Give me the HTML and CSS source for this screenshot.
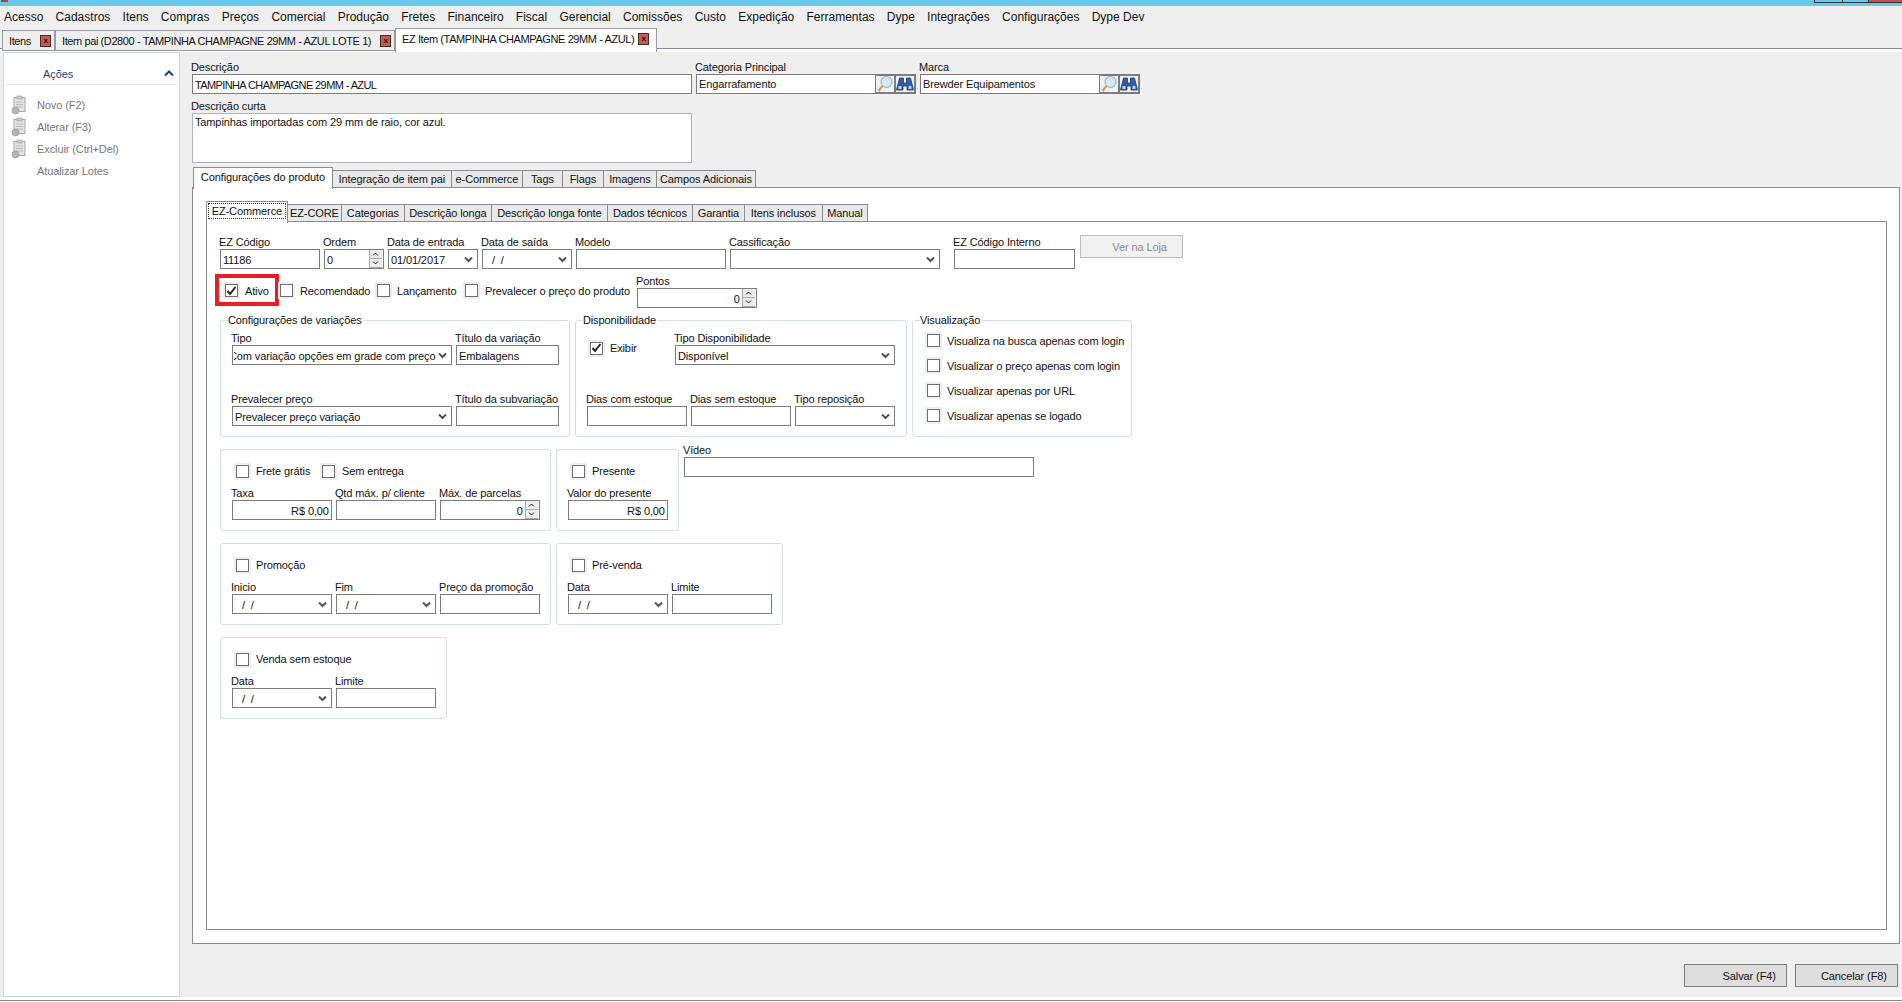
FILE: index.html
```html
<!DOCTYPE html>
<html lang="pt-BR">
<head>
    <meta charset="UTF-8">
    <title>EZ Item</title>
    <link rel="stylesheet" href="styles.css">
</head>
<body>
    <svg class="defs" width="0" height="0">
        <symbol id="chev" viewBox="0 0 9 7"><path d="M1 1.5 4.5 5 8 1.5" fill="none" stroke="#555" stroke-width="2"/></symbol>
        <symbol id="up" viewBox="0 0 7 4"><path d="M1 3.5 3.5 1 6 3.5" fill="none" stroke="#222" stroke-width="1"/></symbol>
        <symbol id="down" viewBox="0 0 7 4"><path d="M1 .5 3.5 3 6 .5" fill="none" stroke="#222" stroke-width="1"/></symbol>
        <symbol id="lens" viewBox="0 0 16 18">
            <circle cx="9.5" cy="7" r="5.5" fill="#d5e8f5" stroke="#9ab6cc" stroke-width="1.2"/>
            <path d="M5.5 11 1.5 16" stroke="#d49a6a" stroke-width="2.4"/>
        </symbol>
        <symbol id="bino" viewBox="0 0 18 18">
            <path d="M3.5 3h4v5h3V3h4l3 12h-6.5V11H7v4H.5z" fill="#2f5fa8" stroke="#17386e" stroke-width=".8"/>
            <path d="M2.5 11h3v3h-3zM12.5 11h3v3h-3z" fill="#b9d2ee"/>
        </symbol>
        <symbol id="clip" viewBox="0 0 16 20">
            <rect x="3" y="2.5" width="11" height="14" fill="#e4e4e4" stroke="#a8a8a8"/>
            <rect x="6" y="1" width="5" height="3" fill="#c8c8c8" stroke="#9a9a9a" stroke-width=".6"/>
            <path d="M5 7h7M5 9.5h7M5 12h7" stroke="#b8b8b8"/>
            <circle cx="4.5" cy="15.5" r="3.5" fill="#b4b4b4" stroke="#949494" stroke-width=".6"/>
        </symbol>
    </svg>

    <div class="titlebar">
        <span class="app_icon"></span>
        <div class="win_btns"><span class="win_btn"></span><span class="win_btn win_btn2"></span><span class="win_btn win_close"></span></div>
    </div>

    <nav class="menubar">
        <span>Acesso</span><span>Cadastros</span><span>Itens</span><span>Compras</span><span>Preços</span><span>Comercial</span><span>Produção</span><span>Fretes</span><span>Financeiro</span><span>Fiscal</span><span>Gerencial</span><span>Comissões</span><span>Custo</span><span>Expedição</span><span>Ferramentas</span><span>Dype</span><span>Integrações</span><span>Configurações</span><span>Dype Dev</span>
    </nav>

    <div class="doc_tabs">
        <div class="doc_tab dt_itens">Itens<span class="close_x">x</span></div>
        <div class="doc_tab dt_pai">Item pai (D2800 - TAMPINHA CHAMPAGNE 29MM - AZUL LOTE 1)<span class="close_x">x</span></div>
        <div class="doc_tab dt_ez doc_active">EZ Item (TAMPINHA CHAMPAGNE 29MM - AZUL)<span class="close_x">x</span></div>
    </div>

    <div class="workspace">
        <aside class="sidebar">
            <div class="side_head"><span>Ações</span><svg class="side_chev" width="10" height="7" viewBox="0 0 10 7"><path d="M1 5.5l4-4 4 4" fill="none" stroke="#1c3f94" stroke-width="2"/></svg></div>
            <div class="side_item"><svg class="side_icon"><use href="#clip"/></svg>Novo (F2)</div>
            <div class="side_item"><svg class="side_icon"><use href="#clip"/></svg>Alterar (F3)</div>
            <div class="side_item"><svg class="side_icon"><use href="#clip"/></svg>Excluir (Ctrl+Del)</div>
            <div class="side_item"><span class="side_icon"></span>Atualizar Lotes</div>
        </aside>

        <main class="main">
            <div class="top_row">
                <div class="field w500"><label>Descrição</label><div class="input caps">TAMPINHA CHAMPAGNE 29MM - AZUL</div></div>
                <div class="field w220"><label>Categoria Principal</label>
                    <div class="input lookup">Engarrafamento
                        <span class="look_btn"><svg width="16" height="18"><use href="#lens"/></svg></span><span class="look_btn"><svg width="18" height="18"><use href="#bino"/></svg></span>
                    </div>
                </div>
                <div class="field w220"><label>Marca</label>
                    <div class="input lookup">Brewder Equipamentos
                        <span class="look_btn"><svg width="16" height="18"><use href="#lens"/></svg></span><span class="look_btn"><svg width="18" height="18"><use href="#bino"/></svg></span>
                    </div>
                </div>
            </div>
            <div class="field w500 short_desc"><label>Descrição curta</label><div class="input textarea">Tampinhas importadas com 29 mm de raio, cor azul.</div></div>

            <div class="tabs outer_tabs">
                <div class="tab tab_active ot1">Configurações do produto</div>
                <div class="tab ot2">Integração de item pai</div>
                <div class="tab ot3">e-Commerce</div>
                <div class="tab ot4">Tags</div>
                <div class="tab ot5">Flags</div>
                <div class="tab ot6">Imagens</div>
                <div class="tab ot7">Campos Adicionais</div>
            </div>
            <div class="outer_panel">
                <div class="tabs inner_tabs">
                    <div class="tab tab_active it1"><span class="focus_txt">EZ-Commerce</span></div>
                    <div class="tab it2">EZ-CORE</div>
                    <div class="tab it3">Categorias</div>
                    <div class="tab it4">Descrição longa</div>
                    <div class="tab it5">Descrição longa fonte</div>
                    <div class="tab it6">Dados técnicos</div>
                    <div class="tab it7">Garantia</div>
                    <div class="tab it8">Itens inclusos</div>
                    <div class="tab it9">Manual</div>
                </div>
                <div class="inner_panel">
                    <div class="row">
                        <div class="field w100"><label>EZ Código</label><div class="input">11186</div></div>
                        <div class="field w60"><label>Ordem</label><div class="input">0<span class="spin"><i><svg width="7" height="4"><use href="#up"/></svg></i><i><svg width="7" height="4"><use href="#down"/></svg></i></span></div></div>
                        <div class="field w90"><label>Data de entrada</label><div class="input select">01/01/2017<svg class="chev"><use href="#chev"/></svg></div></div>
                        <div class="field w90"><label>Data de saída</label><div class="input select date_empty">/ /<svg class="chev"><use href="#chev"/></svg></div></div>
                        <div class="field w150"><label>Modelo</label><div class="input"></div></div>
                        <div class="field w210"><label>Cassificação</label><div class="input select"><svg class="chev"><use href="#chev"/></svg></div></div>
                        <div class="field w121 code_int"><label>EZ Código Interno</label><div class="input"></div></div>
                        <div class="btn btn_off">Ver na Loja</div>
                    </div>

                    <div class="flags_row">
                        <div class="check red_mark"><span class="box on"><svg width="11" height="10" viewBox="0 0 11 10"><path d="M1.5 5 4 8l5.5-7" fill="none" stroke="#222" stroke-width="2"/></svg></span>Ativo</div>
                        <div class="check c_rec"><span class="box"></span>Recomendado</div>
                        <div class="check c_lan"><span class="box"></span>Lançamento</div>
                        <div class="check c_pre"><span class="box"></span>Prevalecer o preço do produto</div>
                        <div class="field w120"><label>Pontos</label><div class="input num">0<span class="spin"><i><svg width="7" height="4"><use href="#up"/></svg></i><i><svg width="7" height="4"><use href="#down"/></svg></i></span></div></div>
                    </div>

                    <div class="row group_row">
                        <div class="group g_conf">
                            <span class="legend">Configurações de variações</span>
                            <div class="row">
                                <div class="field w220"><label>Tipo</label><div class="input select clip_left"><span class="clip_txt">Com variação opções em grade com preço</span><svg class="chev"><use href="#chev"/></svg></div></div>
                                <div class="field w103"><label>Título da variação</label><div class="input">Embalagens</div></div>
                            </div>
                            <div class="row row_gap">
                                <div class="field w220"><label>Prevalecer preço</label><div class="input select">Prevalecer preço variação<svg class="chev"><use href="#chev"/></svg></div></div>
                                <div class="field w103"><label>Título da subvariação</label><div class="input"></div></div>
                            </div>
                        </div>
                        <div class="group g_disp">
                            <span class="legend">Disponibilidade</span>
                            <div class="row">
                                <div class="check c_exibir"><span class="box on"><svg width="11" height="10" viewBox="0 0 11 10"><path d="M1.5 5 4 8l5.5-7" fill="none" stroke="#222" stroke-width="2"/></svg></span>Exibir</div>
                                <div class="field w220"><label>Tipo Disponibilidade</label><div class="input select">Disponível<svg class="chev"><use href="#chev"/></svg></div></div>
                            </div>
                            <div class="row row_gap">
                                <div class="field w100"><label>Dias com estoque</label><div class="input"></div></div>
                                <div class="field w100"><label>Dias sem estoque</label><div class="input"></div></div>
                                <div class="field w100"><label>Tipo reposição</label><div class="input select"><svg class="chev"><use href="#chev"/></svg></div></div>
                            </div>
                        </div>
                        <div class="group g_vis">
                            <span class="legend">Visualização</span>
                            <div class="check"><span class="box"></span>Visualiza na busca apenas com login</div>
                            <div class="check"><span class="box"></span>Visualizar o preço apenas com login</div>
                            <div class="check"><span class="box"></span>Visualizar apenas por URL</div>
                            <div class="check"><span class="box"></span>Visualizar apenas se logado</div>
                        </div>
                    </div>

                    <div class="row block_row">
                        <div class="group small_group g_331">
                            <div class="row check_line">
                                <div class="check c_frete"><span class="box"></span>Frete grátis</div>
                                <div class="check"><span class="box"></span>Sem entrega</div>
                            </div>
                            <div class="row">
                                <div class="field w100"><label>Taxa</label><div class="input num">R$ 0,00</div></div>
                                <div class="field w100"><label>Qtd máx. p/ cliente</label><div class="input"></div></div>
                                <div class="field w100"><label>Máx. de parcelas</label><div class="input num">0<span class="spin"><i><svg width="7" height="4"><use href="#up"/></svg></i><i><svg width="7" height="4"><use href="#down"/></svg></i></span></div></div>
                            </div>
                        </div>
                        <div class="group small_group g_123">
                            <div class="row check_line"><div class="check"><span class="box"></span>Presente</div></div>
                            <div class="field w100"><label>Valor do presente</label><div class="input num">R$ 0,00</div></div>
                        </div>
                        <div class="field w350 video"><label>Vídeo</label><div class="input"></div></div>
                    </div>

                    <div class="row block_row">
                        <div class="group small_group g_331">
                            <div class="row check_line"><div class="check"><span class="box"></span>Promoção</div></div>
                            <div class="row">
                                <div class="field w100"><label>Inicio</label><div class="input select date_empty">/ /<svg class="chev"><use href="#chev"/></svg></div></div>
                                <div class="field w100"><label>Fim</label><div class="input select date_empty">/ /<svg class="chev"><use href="#chev"/></svg></div></div>
                                <div class="field w100"><label>Preço da promoção</label><div class="input"></div></div>
                            </div>
                        </div>
                        <div class="group small_group g_227">
                            <div class="row check_line"><div class="check"><span class="box"></span>Pré-venda</div></div>
                            <div class="row">
                                <div class="field w100"><label>Data</label><div class="input select date_empty">/ /<svg class="chev"><use href="#chev"/></svg></div></div>
                                <div class="field w100"><label>Limite</label><div class="input"></div></div>
                            </div>
                        </div>
                    </div>

                    <div class="row block_row">
                        <div class="group small_group g_227">
                            <div class="row check_line"><div class="check"><span class="box"></span>Venda sem estoque</div></div>
                            <div class="row">
                                <div class="field w100"><label>Data</label><div class="input select date_empty">/ /<svg class="chev"><use href="#chev"/></svg></div></div>
                                <div class="field w100"><label>Limite</label><div class="input"></div></div>
                            </div>
                        </div>
                    </div>
                </div>
            </div>

            <div class="footer">
                <div class="btn">Salvar (F4)</div>
                <div class="btn">Cancelar (F8)</div>
            </div>
        </main>
    </div>
    <div class="bottom_line"></div>
</body>
</html>
```

FILE: styles.css
```css
* {
    margin: 0;
    padding: 0;
    box-sizing: border-box;
}
html, body {
    height: 100%;
    overflow: hidden;
}
body {
    background: #fff;
    color: #111;
    font-family: "Liberation Sans", Arial, sans-serif;
    font-size: 11px;
    line-height: 14px;
    letter-spacing: -.1px;
}
.defs {
    position: absolute;
}

/* top of the window */
.titlebar {
    position: relative;
    height: 6px;
    background: #66c9ec;
}
.app_icon {
    position: absolute;
    left: 1px;
    top: 0;
    width: 7px;
    height: 2px;
    background: #c23b2e;
}
.win_btns {
    position: absolute;
    right: 0;
    top: 0;
    display: flex;
}
.win_btn {
    width: 28px;
    height: 3px;
    border: 1px solid #333;
    border-top: 0;
    border-right: 0;
}
.win_btn2 {
    width: 26px;
}
.win_close {
    width: 34px;
    background: #c75050;
}
.menubar {
    display: flex;
    gap: 12.25px;
    height: 21px;
    padding: 4px 4px 0;
    background: #efefef;
    font-size: 12px;
    letter-spacing: 0;
}
.doc_tabs {
    display: flex;
    align-items: flex-start;
    height: 25px;
    padding: 1px 0 0 2px;
    background: linear-gradient(#efefef 21px, #8a8a94 21px, #8a8a94 22px, #fff 22px);
    letter-spacing: -.4px;
}
.doc_tab {
    display: flex;
    align-items: center;
    justify-content: space-between;
    height: 21px;
    margin-top: 2px;
    padding: 0 3px 0 6px;
    border: 1px solid #9a9aa2;
    background: #efefef;
    white-space: nowrap;
}
.doc_active {
    height: 24px;
    margin-top: 0;
    padding-right: 7px;
    padding-bottom: 3px;
    border-bottom: 0;
    background: #fff;
}
.dt_itens { width: 53px; }
.dt_pai { width: 340px; }
.dt_ez { width: 262px; }
.close_x {
    width: 11px;
    height: 12px;
    border: 1px solid #4a2a26;
    background: #c75a4f;
    color: #111;
    font-size: 8px;
    font-weight: bold;
    line-height: 9px;
    text-align: center;
}

.workspace {
    display: flex;
    height: 945px;
    background: #efefef;
}
.bottom_line {
    height: 1px;
    margin-top: 3px;
    background: #8a8a94;
}

/* left panel */
.sidebar {
    width: 178px;
    margin-left: 3px;
    border: 1px solid #cfd8de;
    background: #fff;
    color: #777;
}
.side_head {
    display: flex;
    align-items: center;
    justify-content: space-between;
    height: 32px;
    padding: 10px 5px 0 39px;
    border-bottom: 1px solid #e4e8ec;
    color: #1f3f77;
}
.side_chev {
    display: block;
}
.side_item {
    display: flex;
    align-items: center;
    gap: 10px;
    height: 22px;
    padding-left: 7px;
    position: relative;
    top: 9px;
}
.side_icon {
    width: 16px;
    height: 20px;
    display: block;
}

/* right side */
.main {
    width: 1721px;
    margin-left: 12px;
    padding-top: 8px;
}
.top_row {
    display: flex;
    gap: 4px;
}
.short_desc {
    margin-top: 5px;
}
.row {
    display: flex;
    gap: 4px;
}
.field {
    display: flex;
    flex-direction: column;
}
.field label {
    height: 14px;
    margin-left: -1px;
    white-space: nowrap;
}
.w60 { width: 60px; }
.w90 { width: 90px; }
.w100 { width: 100px; }
.w103 { width: 103px; }
.w120 { width: 120px; }
.w121 { width: 121px; }
.w150 { width: 150px; }
.w210 { width: 210px; }
.w220 { width: 220px; }
.w350 { width: 350px; }
.w500 { width: 500px; }

.input {
    display: flex;
    align-items: center;
    height: 20px;
    padding: 1px 2px 0 2px;
    border: 1px solid #7c7c7c;
    background: #fff;
    white-space: nowrap;
    overflow: hidden;
}
.caps {
    letter-spacing: -.6px;
}
.textarea {
    align-items: flex-start;
    height: 50px;
    padding-top: 1px;
    border-color: #aeb4b8;
}
.num {
    justify-content: flex-end;
}
.select {
    justify-content: space-between;
    padding-right: 4px;
}
.chev {
    width: 9px;
    height: 7px;
    margin-left: auto;
    flex-shrink: 0;
}
.date_empty {
    padding-left: 9px;
    word-spacing: 3px;
}
.clip_left {
    padding-left: 1px;
}
.clip_txt {
    display: block;
    width: 204px;
    flex-shrink: 0;
    overflow: hidden;
    text-indent: -5px;
}
.lookup {
    padding-right: 0;
    padding-top: 0;
}
.look_btn {
    display: flex;
    align-items: center;
    justify-content: center;
    width: 20px;
    height: 18px;
    border: 1px solid #7c7c7c;
    background: #f1f1f1;
}
.look_btn:first-of-type {
    margin-left: auto;
}
.spin {
    display: flex;
    flex-direction: column;
    width: 13px;
    height: 18px;
    margin: -1px -1px 0 2px;
    flex-shrink: 0;
}
.w60 .spin {
    margin-left: auto;
}
.spin i {
    display: flex;
    align-items: center;
    justify-content: center;
    height: 9px;
    border: 1px solid #a8a8a8;
    border-width: 0 0 1px 1px;
    background: #ececec;
}

/* tabs */
.tabs {
    display: flex;
    align-items: flex-end;
    position: relative;
    z-index: 1;
}
.outer_tabs {
    height: 21px;
    margin-top: 4px;
    margin-left: 1px;
}
.tab {
    display: flex;
    align-items: center;
    justify-content: center;
    height: 18px;
    margin-left: -1px;
    border: 1px solid #8a8a94;
    background: #e9e9e9;
    white-space: nowrap;
}
.tab_active {
    height: 22px;
    margin-bottom: -1px;
    padding-bottom: 3px;
    border-bottom: 0;
    background: #fff;
}
.ot1 { width: 140px; margin-left: 0; }
.ot2 { width: 120px; }
.ot3 { width: 72px; }
.ot4 { width: 41px; }
.ot5 { width: 42px; }
.ot6 { width: 54px; }
.ot7 { width: 100px; }
.it1 { width: 82px; margin-left: 0; }
.it2 { width: 55px; }
.it3 { width: 64px; }
.it4 { width: 88px; }
.it5 { width: 117px; }
.it6 { width: 86px; }
.it7 { width: 53px; }
.it8 { width: 79px; }
.it9 { width: 46px; }
.focus_txt {
    padding: 0 3px;
    border: 1px dotted #333;
}
.outer_panel {
    width: 1708px;
    height: 757px;
    margin-top: -1px;
    padding: 13px 12px 0 13px;
    border: 1px solid #8a8a94;
    background: #fff;
}
.inner_tabs {
    height: 21px;
}
.inner_panel {
    width: 1681px;
    height: 709px;
    margin-top: -1px;
    padding: 13px 13px 0;
    border: 1px solid #8a8a94;
    background: #fff;
}
.code_int {
    margin-left: 10px;
}
.btn {
    display: flex;
    align-items: center;
    justify-content: flex-end;
    width: 103px;
    height: 23px;
    padding-right: 10px;
    border: 1px solid #7c7c7c;
    background: #dedede;
}
.btn_off {
    margin-left: 1px;
    padding-right: 15px;
    border-color: #bcbcbc;
    background: #f1f1f1;
    color: #8a8a8a;
}

/* checkboxes */
.check {
    display: flex;
    align-items: center;
    gap: 5px;
    white-space: nowrap;
}
.box {
    display: flex;
    align-items: center;
    justify-content: center;
    width: 13px;
    height: 13px;
    margin: 2px;
    border: 1px solid #6e6e6e;
    background: #fff;
    box-shadow: 0 0 0 2px #efefef;
    flex-shrink: 0;
}
.flags_row {
    display: flex;
    height: 34px;
    margin-top: 5px;
}
.flags_row .check {
    height: 32px;
    padding-top: 1px;
}
.red_mark {
    width: 64px;
    margin-left: -5px;
    padding-left: 4px;
    border: 4px solid #ed1c24;
}
.c_rec { width: 97px; margin-left: -1px; }
.c_lan { width: 88px; }
.c_pre { width: 174px; }

/* grupos */
.group {
    position: relative;
    border: 1px solid #d5dfe5;
    border-radius: 3px;
    background: #fff;
}
.legend {
    position: absolute;
    top: -8px;
    left: 7px;
    padding-right: 2px;
    background: #fff;
}
.group_row {
    gap: 5px;
    margin-top: 12px;
}
.g_conf, .g_disp, .g_vis {
    height: 117px;
    padding: 10px 10px 0 11px;
}
.g_conf { width: 350px; }
.g_disp { width: 332px; }
.g_vis {
    width: 220px;
    padding: 7px 0 0 12px;
}
.g_vis .check {
    height: 25px;
}
.row_gap {
    margin-top: 27px;
}
.c_exibir {
    width: 84px;
    height: 34px;
    padding-left: 1px;
}
.block_row {
    gap: 5px;
    margin-top: 12px;
    align-items: flex-start;
}
.small_group {
    height: 82px;
    padding: 10px 10px 0 11px;
}
.g_331 { width: 331px; }
.g_123 { width: 123px; }
.g_227 { width: 227px; }
.check_line {
    height: 22px;
    margin-bottom: 4px;
    padding-left: 2px;
    gap: 0;
}
.c_frete {
    width: 86px;
}
.video {
    margin-top: -6px;
}

.footer {
    display: flex;
    justify-content: flex-end;
    gap: 8px;
    width: 1706px;
    margin-top: 20px;
}
```
